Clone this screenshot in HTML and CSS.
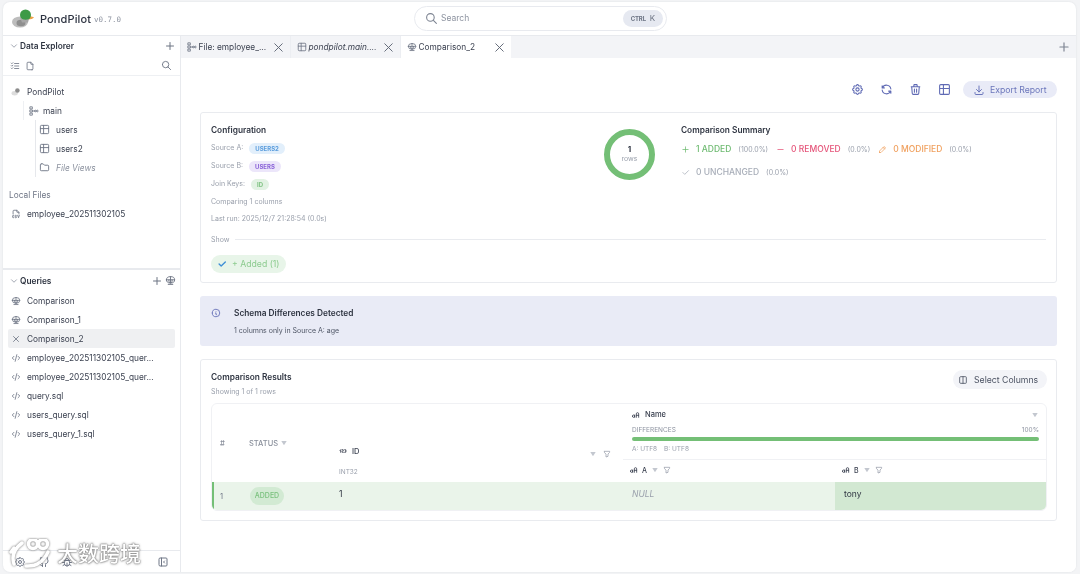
FILE: index.html
```html
<!DOCTYPE html>
<html lang="en">
<head>
<meta charset="utf-8">
<title>PondPilot</title>
<link rel="stylesheet" href="styles.css">
</head>
<body>
<svg class="defs" width="0" height="0" aria-hidden="true">
  <symbol id="i-plus" viewBox="0 0 24 24"><path d="M12 5v14M5 12h14"/></symbol>
  <symbol id="i-x" viewBox="0 0 24 24"><path d="M18 6 6 18M6 6l12 12"/></symbol>
  <symbol id="i-chev" viewBox="0 0 24 24"><path d="M6 9l6 6 6-6"/></symbol>
  <symbol id="i-search" viewBox="0 0 24 24"><path d="M3 10a7 7 0 1 0 14 0a7 7 0 1 0-14 0M21 21l-6-6"/></symbol>
  <symbol id="i-table" viewBox="0 0 24 24"><path d="M3 5a2 2 0 0 1 2-2h14a2 2 0 0 1 2 2v14a2 2 0 0 1-2 2H5a2 2 0 0 1-2-2zM3 10h18M10 3v18"/></symbol>
  <symbol id="i-folder" viewBox="0 0 24 24"><path d="M5 4h4l3 3h7a2 2 0 0 1 2 2v8a2 2 0 0 1-2 2H5a2 2 0 0 1-2-2V6a2 2 0 0 1 2-2"/></symbol>
  <symbol id="i-file" viewBox="0 0 24 24"><path d="M14 3v4a1 1 0 0 0 1 1h4M17 21H7a2 2 0 0 1-2-2V5a2 2 0 0 1 2-2h7l5 5v11a2 2 0 0 1-2 2z"/></symbol>
  <symbol id="i-csv" viewBox="0 0 24 24"><path d="M14 3v4a1 1 0 0 0 1 1h4M5 12V5a2 2 0 0 1 2-2h7l5 5v4M7 16.500a1.500 1.500 0 0 0-3 0v3a1.500 1.500 0 0 0 3 0M10 20.250c0 .414.336.75.75.75h1.250a1 1 0 0 0 1-1v-1a1 1 0 0 0-1-1h-1a1 1 0 0 1-1-1v-1a1 1 0 0 1 1-1h1.250a.75.75 0 0 1 .75.75M16 15l2 6 2-6"/></symbol>
  <symbol id="i-code" viewBox="0 0 24 24"><path d="M7 8l-4 4 4 4M17 8l4 4-4 4M14 4l-4 16"/></symbol>
  <symbol id="i-scale-o" viewBox="0 0 24 24"><path d="M3 10.500a9 7 0 1 1 18 0a9 7 0 1 1-18 0M3 10.500h18M12 3.500v14M7 20.500h10M8.500 10.500v3a3.500 3.500 0 0 0 7 0v-3"/></symbol>
  <symbol id="i-gear" viewBox="0 0 24 24"><path d="M10.325 4.317c.426-1.756 2.924-1.756 3.350 0a1.724 1.724 0 0 0 2.573 1.066c1.543-.94 3.310.826 2.370 2.370a1.724 1.724 0 0 0 1.065 2.572c1.756.426 1.756 2.924 0 3.350a1.724 1.724 0 0 0-1.066 2.573c.94 1.543-.826 3.310-2.370 2.370a1.724 1.724 0 0 0-2.572 1.065c-.426 1.756-2.924 1.756-3.350 0a1.724 1.724 0 0 0-2.573-1.066c-1.543.94-3.310-.826-2.370-2.370a1.724 1.724 0 0 0-1.065-2.572c-1.756-.426-1.756-2.924 0-3.350a1.724 1.724 0 0 0 1.066-2.573c-.94-1.543.826-3.310 2.370-2.370 1 .608 2.296.07 2.572-1.065zM9 12a3 3 0 1 0 6 0 3 3 0 0 0-6 0"/></symbol>
  <symbol id="i-refresh" viewBox="0 0 24 24"><path d="M20 11A8.100 8.100 0 0 0 4.500 9M4 5v4h4M4 13a8.100 8.100 0 0 0 15.500 2m.5 4v-4h-4"/></symbol>
  <symbol id="i-trash" viewBox="0 0 24 24"><path d="M4 7h16M10 11v6M14 11v6M5 7l1 12a2 2 0 0 0 2 2h8a2 2 0 0 0 2-2l1-12M9 7V4a1 1 0 0 1 1-1h4a1 1 0 0 1 1 1v3"/></symbol>
  <symbol id="i-download" viewBox="0 0 24 24"><path d="M4 17v2a2 2 0 0 0 2 2h12a2 2 0 0 0 2-2v-2M7 11l5 5 5-5M12 4v12"/></symbol>
  <symbol id="i-info" viewBox="0 0 24 24"><path d="M3 12a9 9 0 1 0 18 0a9 9 0 0 0-18 0M12 9h.01M11 12h1v4h1"/></symbol>
  <symbol id="i-check" viewBox="0 0 24 24"><path d="M5 12l5 5L20 7"/></symbol>
  <symbol id="i-minus" viewBox="0 0 24 24"><path d="M5 12h14"/></symbol>
  <symbol id="i-pencil" viewBox="0 0 24 24"><path d="M4 20h4L18.500 9.500a2.828 2.828 0 1 0-4-4L4 16v4M13.500 6.500l4 4"/></symbol>
  <symbol id="i-filter" viewBox="0 0 24 24"><path d="M4 4h16v2.172a2 2 0 0 1-.586 1.414L15 12v7l-6 2v-8.500L4.520 7.572A2 2 0 0 1 4 6.227z"/></symbol>
  <symbol id="i-cols" viewBox="0 0 24 24"><path d="M4 6a2 2 0 0 1 2-2h12a2 2 0 0 1 2 2v12a2 2 0 0 1-2 2H6a2 2 0 0 1-2-2zM12 4v16"/></symbol>
  <symbol id="i-github" viewBox="0 0 24 24"><path d="M9 19c-4.300 1.400-4.300-2.500-6-3m12 5v-3.500c0-1 .1-1.400-.5-2 2.800-.3 5.500-1.400 5.500-6a4.600 4.600 0 0 0-1.300-3.200 4.200 4.200 0 0 0-.1-3.200s-1.100-.3-3.500 1.300a12.300 12.300 0 0 0-6.200 0C6.500 2.800 5.400 3.100 5.400 3.100a4.200 4.200 0 0 0-.1 3.200A4.600 4.600 0 0 0 4 9.500c0 4.600 2.700 5.700 5.500 6-.6.6-.6 1.200-.5 2V21"/></symbol>
  <symbol id="i-bug" viewBox="0 0 24 24"><path d="M9 9v-1a3 3 0 0 1 6 0v1M8 9h8a6 6 0 0 1 1 3v3a5 5 0 0 1-10 0v-3a6 6 0 0 1 1-3M3 13h4M17 13h4M12 20v-6M4 19l3.350-2M20 19l-3.350-2M4 7l3.750 2.400M20 7l-3.750 2.400"/></symbol>
  <symbol id="i-collapse" viewBox="0 0 24 24"><path d="M4 6a2 2 0 0 1 2-2h12a2 2 0 0 1 2 2v12a2 2 0 0 1-2 2H6a2 2 0 0 1-2-2zM9 4v16M15 10l-2 2 2 2"/></symbol>
  <symbol id="i-tree" viewBox="0 0 24 24"><path d="M11 6h10M11 12h10M11 18h10M3 5l1.500 1.500L7 4M3 11l1.500 1.500L7 10M3 17l1.500 1.500L7 16"/></symbol>
  <symbol id="i-schema" viewBox="0 0 24 24"><path d="M3 2h5v5H3zM3 9.500h5v5H3zM3 17h5v5H3zM8 12h4M13 12a2 2 0 1 0 4 0a2 2 0 1 0-4 0M18 12a2 2 0 1 0 4 0a2 2 0 1 0-4 0"/></symbol>
  <symbol id="i-aa" viewBox="0 0 24 24"><path d="M1 15.500a3.500 3.500 0 1 0 7 0a3.500 3.500 0 1 0-7 0M8 12v7M13 19V8.500a3.500 3.500 0 0 1 7 0V19M13 13h7"/></symbol>
  <symbol id="i-123" viewBox="0 0 24 24"><path d="M3 10l2-2v8M9 8h3a1 1 0 0 1 1 1v2a1 1 0 0 1-1 1h-2a1 1 0 0 0-1 1v2a1 1 0 0 0 1 1h3M17 8h2.500a1.500 1.500 0 0 1 1.500 1.500v1a1.500 1.500 0 0 1-1.500 1.500H18h1.500a1.500 1.500 0 0 1 1.500 1.500v1a1.500 1.500 0 0 1-1.500 1.500H17"/></symbol>
  <symbol id="i-sort" viewBox="0 0 24 24"><path class="solid" d="M4 6h16l-8 13z"/></symbol>
</svg>

<div class="app">
  <header class="topbar">
    <div class="brand">
      <svg class="logo" viewBox="0 0 22 19" aria-hidden="true">
        <ellipse cx="8" cy="13" rx="8" ry="5.500" fill="#bdbdbd"/>
        <ellipse cx="9" cy="14" rx="4.500" ry="3.200" fill="#8f8f8f"/>
        <path d="M16 6.500l6 1.800q-1.500 2.200-6 2.200z" fill="#f0a248"/>
        <circle cx="13.500" cy="6" r="5.500" fill="#3d9a46"/>
        <path d="M8 8.500q4 3.500 9 1.500l-1 3.500h-6z" fill="#a6a6a6"/>
      </svg>
      <span class="brand-name">PondPilot</span>
      <span class="brand-ver">v0.7.0</span>
    </div>
    <div class="search">
      <svg class="ic ic-search"><use href="#i-search"/></svg>
      <span class="search-text">Search</span>
      <span class="kbd"><span class="kbd-ctrl">CTRL</span><span class="kbd-k">K</span></span>
    </div>
  </header>

  <div class="body">
    <aside class="sidebar">
      <section class="pane pane-top">
        <div class="pane-head">
          <svg class="ic ic-chev"><use href="#i-chev"/></svg>
          <span class="pane-title">Data Explorer</span>
          <svg class="ic ic-add"><use href="#i-plus"/></svg>
        </div>
        <div class="pane-tools">
          <svg class="ic ic-tool"><use href="#i-tree"/></svg>
          <svg class="ic ic-tool"><use href="#i-file"/></svg>
          <svg class="ic ic-tool ic-end"><use href="#i-search"/></svg>
        </div>
        <ul class="list list-tree">
          <li class="row">
            <svg class="duck" viewBox="0 0 24 20" aria-hidden="true"><ellipse cx="8" cy="14" rx="7" ry="5" fill="#ddd"/><circle cx="14" cy="8" r="5" fill="#8c8c8c"/></svg>
            <span>PondPilot</span>
          </li>
          <li class="nest nest-1">
            <div class="row"><svg class="ic ic-row"><use href="#i-schema"/></svg><span>main</span></div>
          </li>
          <li class="nest nest-2">
            <div class="row"><svg class="ic ic-row"><use href="#i-table"/></svg><span>users</span></div>
            <div class="row"><svg class="ic ic-row"><use href="#i-table"/></svg><span>users2</span></div>
            <div class="row row-muted"><svg class="ic ic-row"><use href="#i-folder"/></svg><span>File Views</span></div>
          </li>
        </ul>
        <div class="local-label">Local Files</div>
        <ul class="list">
          <li class="row"><svg class="ic ic-row"><use href="#i-csv"/></svg><span>employee_202511302105</span></li>
        </ul>
      </section>

      <section class="pane pane-queries">
        <div class="pane-head pane-head-q">
          <svg class="ic ic-chev"><use href="#i-chev"/></svg>
          <span class="pane-title">Queries</span>
          <svg class="ic ic-add"><use href="#i-plus"/></svg>
          <svg class="ic ic-add2"><use href="#i-scale-o"/></svg>
        </div>
        <ul class="list">
          <li class="row"><svg class="ic ic-row"><use href="#i-scale-o"/></svg><span>Comparison</span></li>
          <li class="row"><svg class="ic ic-row"><use href="#i-scale-o"/></svg><span>Comparison_1</span></li>
          <li class="row row-active"><svg class="ic ic-row"><use href="#i-x"/></svg><span>Comparison_2</span></li>
          <li class="row"><svg class="ic ic-row"><use href="#i-code"/></svg><span>employee_202511302105_quer...</span></li>
          <li class="row"><svg class="ic ic-row"><use href="#i-code"/></svg><span>employee_202511302105_quer...</span></li>
          <li class="row"><svg class="ic ic-row"><use href="#i-code"/></svg><span>query.sql</span></li>
          <li class="row"><svg class="ic ic-row"><use href="#i-code"/></svg><span>users_query.sql</span></li>
          <li class="row"><svg class="ic ic-row"><use href="#i-code"/></svg><span>users_query_1.sql</span></li>
        </ul>
      </section>

      <footer class="side-foot">
        <svg class="ic ic-foot"><use href="#i-gear"/></svg>
        <svg class="ic ic-foot"><use href="#i-github"/></svg>
        <svg class="ic ic-foot"><use href="#i-bug"/></svg>
        <svg class="ic ic-foot ic-end"><use href="#i-collapse"/></svg>
      </footer>
    </aside>

    <main class="main">
      <nav class="tabs">
        <div class="tab">
          <svg class="ic ic-tab"><use href="#i-schema"/></svg>
          <span class="tab-text">File: employee_...</span>
          <svg class="ic ic-close"><use href="#i-x"/></svg>
        </div>
        <div class="tab">
          <svg class="ic ic-tab"><use href="#i-table"/></svg>
          <span class="tab-text tab-italic">pondpilot.main....</span>
          <svg class="ic ic-close"><use href="#i-x"/></svg>
        </div>
        <div class="tab tab-active">
          <svg class="ic ic-tab"><use href="#i-scale-o"/></svg>
          <span class="tab-text">Comparison_2</span>
          <svg class="ic ic-close"><use href="#i-x"/></svg>
        </div>
        <svg class="ic ic-tabadd"><use href="#i-plus"/></svg>
      </nav>

      <div class="content">
        <div class="toolbar">
          <svg class="ic ic-act"><use href="#i-gear"/></svg>
          <svg class="ic ic-act"><use href="#i-refresh"/></svg>
          <svg class="ic ic-act"><use href="#i-trash"/></svg>
          <svg class="ic ic-act"><use href="#i-table"/></svg>
          <button class="export" type="button"><svg class="ic ic-dl"><use href="#i-download"/></svg>Export Report</button>
        </div>

        <section class="card card-config">
          <div class="config-top">
            <div class="config">
              <h2 class="card-title">Configuration</h2>
              <div class="meta meta-badge meta-first"><span>Source A:</span><span class="badge badge-blue">USERS2</span></div>
              <div class="meta meta-badge"><span>Source B:</span><span class="badge badge-violet">USERS</span></div>
              <div class="meta meta-badge"><span>Join Keys:</span><span class="badge badge-green">ID</span></div>
              <div class="meta meta-a">Comparing 1 columns</div>
              <div class="meta meta-b">Last run: 2025/12/7 21:28:54 (0.0s)</div>
            </div>
            <div class="ring"><strong>1</strong><span>rows</span></div>
            <div class="summary">
              <h2 class="card-title">Comparison Summary</h2>
              <div class="sum-row">
                <span class="sum c-green"><svg class="ic ic-sum"><use href="#i-plus"/></svg><b>1 ADDED</b><i>(100.0%)</i></span>
                <span class="sum c-red"><svg class="ic ic-sum"><use href="#i-minus"/></svg><b>0 REMOVED</b><i>(0.0%)</i></span>
                <span class="sum c-orange"><svg class="ic ic-sum"><use href="#i-pencil"/></svg><b>0 MODIFIED</b><i>(0.0%)</i></span>
              </div>
              <div class="sum-row sum-row-2">
                <span class="sum c-gray"><svg class="ic ic-sum"><use href="#i-check"/></svg><b>0 UNCHANGED</b><i>(0.0%)</i></span>
              </div>
            </div>
          </div>
          <div class="show-line"><span>Show</span></div>
          <div class="chip"><svg class="ic ic-chipcheck"><use href="#i-check"/></svg><span>+ Added (1)</span></div>
        </section>

        <section class="alert">
          <svg class="ic ic-info"><use href="#i-info"/></svg>
          <div>
            <div class="alert-title">Schema Differences Detected</div>
            <div class="alert-body">1 columns only in Source A: age</div>
          </div>
        </section>

        <section class="card card-results">
          <div class="results-head">
            <div>
              <h2 class="card-title">Comparison Results</h2>
              <div class="results-sub">Showing 1 of 1 rows</div>
            </div>
            <button class="select-cols" type="button"><svg class="ic ic-selcols"><use href="#i-cols"/></svg>Select Columns</button>
          </div>
          <div class="table-wrap">
            <table class="grid">
              <colgroup>
                <col class="c1"><col class="c2"><col class="c3"><col class="c4"><col class="c5">
              </colgroup>
              <thead>
                <tr>
                  <th rowspan="2" class="th-plain">#</th>
                  <th rowspan="2" class="th-plain th-status">STATUS<svg class="ic ic-srt"><use href="#i-sort"/></svg></th>
                  <th rowspan="2" class="th-id">
                    <div class="id-line">
                      <svg class="ic ic-type"><use href="#i-123"/></svg><span class="col-name">ID</span>
                      <svg class="ic ic-srt ic-end"><use href="#i-sort"/></svg><svg class="ic ic-flt"><use href="#i-filter"/></svg>
                    </div>
                    <div class="col-type">INT32</div>
                  </th>
                  <th colspan="2" class="th-name">
                    <div class="name-line"><svg class="ic ic-type"><use href="#i-aa"/></svg><span class="col-name">Name</span><svg class="ic ic-srt ic-end"><use href="#i-sort"/></svg></div>
                    <div class="diff-line"><span>DIFFERENCES</span><span>100%</span></div>
                    <div class="bar"></div>
                    <div class="enc"><span>A: UTF8</span><span>B: UTF8</span></div>
                  </th>
                </tr>
                <tr>
                  <th class="th-sub"><svg class="ic ic-type"><use href="#i-aa"/></svg><span>A</span><svg class="ic ic-srt"><use href="#i-sort"/></svg><svg class="ic ic-flt"><use href="#i-filter"/></svg></th>
                  <th class="th-sub"><svg class="ic ic-type"><use href="#i-aa"/></svg><span>B</span><svg class="ic ic-srt"><use href="#i-sort"/></svg><svg class="ic ic-flt"><use href="#i-filter"/></svg></th>
                </tr>
              </thead>
              <tbody>
                <tr>
                  <td class="td-idx">1</td>
                  <td class="td-status"><span class="added">ADDED</span></td>
                  <td class="td-id">1</td>
                  <td class="td-null">NULL</td>
                  <td class="td-val">tony</td>
                </tr>
              </tbody>
            </table>
          </div>
        </section>
      </div>
    </main>
  </div>

  <div class="watermark">
    <svg class="wm-logo" viewBox="0 0 50 30" aria-hidden="true">
      <path d="M7 25Q3 13 15 4M4 13l3-4M19 27Q34 28 41 13M21.500 5a4.500 4.500 0 1 0 9 0a4.500 4.500 0 1 0-9 0M31.500 5a4.500 4.500 0 1 0 9 0a4.500 4.500 0 1 0-9 0"/>
    </svg>
    <span class="wm-text">大数跨境</span>
  </div>
</div>
</body>
</html>
```
FILE: styles.css
```css
* { box-sizing: border-box; }
html, body { margin: 0; padding: 0; height: 100%; overflow: hidden; }
body {
  background: #f3f4f6;
  font-family: "Inter", "Noto Sans", sans-serif;
  font-size: 9px;
  color: #3b4150;
}
.defs { position: absolute; }
symbol path { fill: none; stroke: currentColor; stroke-width: var(--sw, 2); stroke-linecap: round; stroke-linejoin: round; }
symbol path.solid { fill: currentColor; stroke: none; }
ul { list-style: none; margin: 0; padding: 0; }
h2 { margin: 0; font: inherit; }
button { font: inherit; border: 0; }

.ic { display: block; flex: none; width: 12px; height: 12px; }
.ic-end { margin-left: auto; }

.app {
  position: relative;
  margin: 2px 0 0 3px;
  width: 1073px;
  height: 570px;
  background: #fff;
  border-radius: 7px;
  display: flex;
  flex-direction: column;
  overflow: hidden;
  box-shadow: 0 0 2px rgba(60, 70, 90, .12);
  filter: blur(.3px);
}

/* Top bar */
.topbar {
  flex: none;
  height: 34px;
  display: grid;
  grid-template-columns: 1fr 253px 1fr;
  align-items: center;
  padding-left: 2px;
  border-bottom: 1px solid #e8eaee;
}
.brand { display: flex; align-items: center; padding-left: 7px; }
.logo { width: 22px; height: 19px; margin-right: 6px; }
.brand-name { font-size: 11px; font-weight: 500; color: #2c3240; letter-spacing: .01em; }
.brand-ver { font-family: "DejaVu Sans Mono", monospace; font-size: 7.500px; color: #8d93a0; margin-left: 3px; margin-top: 2px; }
.search {
  height: 25px;
  border: 1px solid #e8eaef;
  border-radius: 13px;
  display: flex;
  align-items: center;
  padding: 0 3px 0 10px;
  margin-top: -1px;
  color: #7d8492;
}
.ic-search { width: 13px; height: 13px; margin-right: 3px; }
.search-text { font-size: 8.500px; color: #8d93a0; }
.kbd {
  margin-left: auto;
  width: 40px;
  height: 17px;
  border-radius: 9px;
  background: #e6e9f1;
  display: flex;
  align-items: center;
  justify-content: center;
  gap: 4px;
  color: #6a7282;
}
.kbd-ctrl { font-size: 6px; font-weight: 700; letter-spacing: -.03em; }
.kbd-k { font-size: 8px; }

.body { flex: 1; min-height: 0; display: flex; }

/* Sidebar */
.sidebar {
  flex: none;
  width: 178px;
  border-right: 1px solid #e8eaee;
  display: flex;
  flex-direction: column;
}
.pane-top { height: 234px; border-bottom: 2px solid #e8eaee; }
.pane-queries { flex: 1; min-height: 0; }
.pane-head {
  display: flex;
  align-items: center;
  height: 20px;
  padding: 0 4px 0 6px;
  color: #8d93a0;
}
.pane-head-q { height: 21px; }
.ic-chev { width: 10px; height: 10px; color: #9298a5; margin-right: 1px; }
.pane-title { font-size: 8.300px; font-weight: 600; color: #2f3542; flex: 1; }
.ic-add { width: 12px; height: 12px; color: #6d7483; }
.ic-add2 { width: 11px; height: 11px; color: #6d7483; margin-left: 2px; }
.pane-tools {
  display: flex;
  align-items: center;
  gap: 5px;
  height: 20px;
  padding: 0 8px 0 7px;
  border-bottom: 1px solid #eef0f3;
}
.ic-tool { width: 10px; height: 10px; color: #6f7686; }
.ic-tool.ic-end { width: 11px; height: 11px; }

.list { padding: 0 5px; }
.list-tree { padding-top: 6px; }
.row {
  display: flex;
  align-items: center;
  height: 19px;
  padding: 0 3px;
  border-radius: 2px;
  font-size: 8.300px;
  color: #3b4150;
  white-space: nowrap;
}
.ic-row { width: 10px; height: 10px; color: #6f7686; margin-right: 6px; }
.duck { width: 11px; height: 9px; margin-right: 5px; flex: none; }
.row-active { background: #eff0f2; }
.row-muted { color: #8d93a0; font-style: italic; }
.nest-1 { margin-left: 15px; border-left: 1px solid #eef0f3; padding-left: 2px; }
.nest-2 { margin-left: 27px; border-left: 1px solid #e6e8ec; padding-left: 2px; }
.nest-1 .ic-row { margin-right: 4px; }
.nest-2 .row { padding-left: 1px; }
.nest-2 .ic-row { margin-right: 6px; width: 11px; height: 11px; }
.local-label { margin: 12px 0 3px 6px; font-size: 8.300px; color: #6f7686; height: 12px; line-height: 12px; }
.side-foot {
  flex: none;
  height: 22px;
  margin-top: auto;
  border-top: 1px solid #e8eaee;
  display: flex;
  align-items: center;
  gap: 11.500px;
  padding: 0 11px 0 11px;
}
.ic-foot { width: 12px; height: 12px; color: #6f7686; }

/* Main */
.main { flex: 1; min-width: 0; display: flex; flex-direction: column; }
.tabs {
  flex: none;
  height: 22px;
  display: flex;
  align-items: stretch;
  background: #f3f4f7;
  padding-right: 5px;
}
.tab {
  width: 110px;
  display: flex;
  align-items: center;
  padding: 0 4px 0 6px;
  border-right: 1px solid #eceef2;
}
.tab-active { background: #fff; border-right: 0; }
.ic-tab { width: 10px; height: 10px; color: #6f7686; margin-right: 1.500px; }
.tab-text { font-size: 8.300px; color: #3b4150; white-space: nowrap; }
.tab-italic { font-style: italic; }
.ic-close { width: 15px; height: 15px; margin-left: auto; color: #5d6473; --sw: 1.500; }
.ic-tabadd { width: 14px; height: 14px; margin: auto 0 auto auto; color: #7d8492; }

.content { flex: 1; padding: 23px 19px 0; background: #fff; }
.toolbar { display: flex; align-items: center; height: 17px; margin-bottom: 14px; }
.ic-act { width: 13px; height: 13px; color: #5f6ab4; margin-right: 16px; }
.toolbar .ic-act:first-child { margin-left: auto; }
.toolbar .ic-act:nth-child(4) { margin-right: 12.500px; }
.export {
  width: 94px;
  height: 17px;
  border-radius: 9px;
  background: #e9ebf7;
  color: #6b76bb;
  font-size: 8.700px;
  display: flex;
  align-items: center;
  padding: 0 0 0 10px;
}
.ic-dl { width: 12px; height: 12px; margin-right: 5px; }

.card { border: 1px solid #e9ebef; border-radius: 3px; background: #fff; }
.card-title { font-size: 8.300px; font-weight: 600; color: #2f3542; line-height: 12px; }
.card-config { height: 171px; padding: 11px 10px 0; }
.config-top { display: grid; grid-template-columns: 393px 51px 1fr; height: 108px; }
.meta { color: #9aa0ac; font-size: 7px; line-height: 10px; }
.meta-badge { display: flex; align-items: center; gap: 6px; height: 18px; }
.meta-first { margin-top: 3px; }
.meta-a { margin-top: 4px; margin-bottom: 7px; }
.badge {
  height: 11px;
  padding: 0 6px;
  border-radius: 6px;
  font-size: 6px;
  font-weight: 700;
  line-height: 11px;
}
.badge-blue { background: #e2effb; color: #5b9ddd; }
.badge-violet { background: #ece6fa; color: #8a63d8; }
.badge-green { background: #e2f2e3; color: #7cc07f; }
.ring {
  width: 51px;
  height: 51px;
  margin-top: 5px;
  border: 6px solid #74bf76;
  border-radius: 50%;
  display: flex;
  flex-direction: column;
  align-items: center;
  justify-content: center;
}
.ring strong { font-size: 8px; font-weight: 700; color: #2f3542; line-height: 10px; margin-top: -1px; }
.ring span { font-size: 7px; color: #9aa0ac; line-height: 10px; }
.summary { margin-left: 26px; }
.sum-row { display: flex; gap: 8px; margin-top: 7px; height: 12px; align-items: center; }
.sum-row-2 { margin-top: 11px; }
.sum { display: flex; align-items: center; }
.sum b { font-weight: 500; font-size: 8.500px; }
.sum i { font-style: normal; font-size: 7px; color: #9aa0ac; margin-left: 7px; }
.ic-sum { width: 9px; height: 9px; margin-right: 6px; }
.c-green { color: #6fbb72; }
.c-red { color: #e5557a; }
.c-orange { color: #f0a05e; }
.c-gray { color: #a7adb8; }
.show-line { display: flex; align-items: center; gap: 6px; margin-top: 1px; height: 12px; color: #9aa0ac; font-size: 7px; }
.show-line::after { content: ""; flex: 1; height: 1px; background: #e9ebef; }
.chip {
  display: inline-flex;
  align-items: center;
  height: 18px;
  margin-top: 10px;
  padding: 0 6px;
  border-radius: 9px;
  background: #e8f5e9;
  color: #8ccb8f;
  font-size: 8.700px;
}
.ic-chipcheck { width: 10px; height: 10px; color: #3f8fd6; margin-right: 5px; --sw: 3.200; }

.alert {
  height: 50px;
  margin-top: 13px;
  padding: 11px 11px;
  background: #e9ebf6;
  border-radius: 3px;
  display: flex;
  gap: 13px;
}
.ic-info { width: 10px; height: 10px; color: #5f6ab4; margin-top: 1px; }
.alert-title { font-size: 8.300px; font-weight: 600; color: #2f3542; line-height: 12px; }
.alert-body { font-size: 7px; color: #4d5464; line-height: 10px; margin-top: 7px; }

.card-results { margin-top: 13px; height: 162px; padding: 11px 9px 0 10px; }
.results-head { display: flex; justify-content: space-between; align-items: flex-start; height: 32px; }
.results-sub { font-size: 7px; color: #9aa0ac; line-height: 10px; margin-top: 4px; }
.select-cols {
  width: 94px;
  height: 19px;
  margin-top: -1px;
  border-radius: 10px;
  background: #f3f4f8;
  color: #4d5464;
  font-size: 8.700px;
  display: flex;
  align-items: center;
  padding: 0 0 0 5px;
}
.ic-selcols { width: 10px; height: 10px; margin-right: 6px; }

.table-wrap { border: 1px solid #f0f1f4; border-radius: 6px; overflow: hidden; }
.grid { width: 834px; border-collapse: collapse; table-layout: fixed; }
.c1 { width: 28px; }
.c2 { width: 89px; }
.c3 { width: 293px; }
.c4 { width: 212px; }
.c5 { width: 212px; }
th { font-weight: 400; text-align: left; padding: 0; vertical-align: top; }
.th-plain { vertical-align: middle; padding-left: 7px; color: #8a909c; font-size: 7.500px; font-weight: 500; }
.th-status { padding-left: 8px; }
.th-status .ic-srt { display: inline-block; vertical-align: -1px; margin-left: 2px; }
.ic-srt { width: 8px; height: 8px; color: #c3c7cf; }
.ic-flt { width: 8px; height: 8px; color: #8d93a0; margin-left: 6px; margin-top: 6px; }
.ic-type { width: 8px; height: 8px; color: #3b4150; --sw: 2.500; }
.id-line .ic-srt { margin-top: 6px; }
.col-name { font-size: 7.500px; font-weight: 500; color: #3b4150; margin-left: 5px; }
.th-id { padding: 41px 12px 0 9px; vertical-align: top; }
.id-line { display: flex; align-items: center; height: 12px; }
.col-type { font-size: 6.500px; color: #9aa0ac; margin-top: 11px; line-height: 9px; }
.th-name { height: 55px; padding: 5px 8px 0 9px; border-bottom: 1px solid #f0f1f4; }
.name-line { display: flex; align-items: center; height: 11px; }
.diff-line { display: flex; justify-content: space-between; margin-top: 6px; font-size: 6.500px; color: #8d93a0; line-height: 9px; }
.bar { height: 4px; border-radius: 2px; background: #74bf76; margin-top: 2px; }
.enc { display: flex; gap: 7px; font-size: 6.500px; color: #9aa0ac; margin-top: 4px; line-height: 9px; }
.th-sub { height: 23px; padding-left: 7px; vertical-align: middle; font-size: 7px; font-weight: 500; color: #3b4150; }
.th-sub .ic { display: inline-block; vertical-align: -1px; margin-top: 0; }
.th-sub span { margin: 0 4px; }
.th-sub .ic-flt { margin-left: 4px; }
td { height: 28px; padding: 0; background: #eaf4ea; font-size: 8.500px; color: #2f3542; }
.td-idx { padding-left: 6px; border-left: 2px solid #74bf76; font-size: 7.500px; color: #6f7686; }
.td-status { padding-left: 9px; }
.added {
  display: inline-block;
  vertical-align: middle;
  width: 34px;
  height: 18px;
  border-radius: 9px;
  background: #d2ead3;
  color: #79c07c;
  font-size: 7px;
  font-weight: 500;
  line-height: 18px;
  text-align: center;
}
.td-id { padding: 0 0 5px 9px; }
.td-null { padding: 0 0 5px 9px; font-style: italic; color: #9aa0ac; }
.td-val { padding: 0 0 5px 9px; background: #d2e8d2; }

/* Watermark photographed over the sidebar footer */
.watermark {
  position: absolute;
  left: 4px;
  bottom: 3px;
  display: flex;
  align-items: flex-start;
  pointer-events: none;
  opacity: .9;
}
.wm-logo { width: 50px; height: 30px; filter: drop-shadow(0 0 1px #555); }
.wm-logo path { fill: none; stroke: #fff; stroke-width: 3.500; stroke-linecap: round; }
.wm-text {
  font-family: "Noto Sans CJK SC", sans-serif;
  font-size: 21px;
  font-weight: 500;
  line-height: 26px;
  color: #fff;
  text-shadow: 0 0 1px #555, 0 0 2px #777, 0 0 3px #999;
}
```
